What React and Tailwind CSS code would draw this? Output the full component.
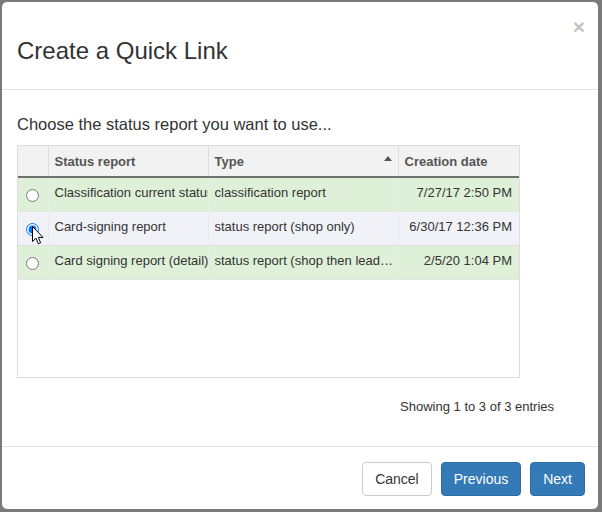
import React, { useState } from 'react';

const reports = [
  { id: 1, name: 'Classification current status', type: 'classification report', date: '7/27/17 2:50 PM', bg: 'bg-[#dff0d8]' },
  { id: 2, name: 'Card-signing report', type: 'status report (shop only)', date: '6/30/17 12:36 PM', bg: 'bg-[#f0f2f8]' },
  { id: 3, name: 'Card signing report (detail)', type: 'status report (shop then leader)', date: '2/5/20 1:04 PM', bg: 'bg-[#dff0d8]' },
];

function Cursor() {
  return (
    <svg className="absolute left-[14px] top-[6px] pointer-events-none" width="12" height="19" viewBox="0 0 12 19">
      <path d="M0.5 0.5 L0.5 15.5 L4 12.2 L6.3 17.8 L8.6 16.8 L6.3 11.4 L11 11.4 Z" fill="#fff" stroke="#000" strokeWidth="1" strokeLinejoin="miter" />
    </svg>
  );
}

export default function App() {
  const [selected, setSelected] = useState(2);

  return (
    <div className="w-[602px] h-[512px] bg-[#7b7b7b] pl-[2px] pt-[2px] font-['Liberation_Sans',Arial,sans-serif] text-[#333]">
      <div className="w-[596px] h-[507px] bg-white rounded-[5px] flex flex-col overflow-hidden">
        {/* Header */}
        <div className="h-[88px] border-b border-[#e5e5e5] pl-[15px] pr-[13px] pt-[14px] flex items-start justify-between shrink-0">
          <h3 className="mt-[22px] text-[24px] leading-[1.1] font-normal text-[#333]">Create a Quick Link</h3>
          <button className="text-[21px] leading-[21px] font-bold text-[#c4c4c4]">×</button>
        </div>

        {/* Body */}
        <div className="flex-1 px-[15px] pt-[24px]">
          <p className="text-[16.5px] leading-[20px]">Choose the status report you want to use...</p>

          <div className="mt-[11px] w-[503px] h-[233px] border border-[#ddd]">
            <table className="table-fixed border-collapse w-[501px] text-[13px] leading-[19px]">
              <colgroup>
                <col className="w-[30px]" />
                <col className="w-[160px]" />
                <col className="w-[190px]" />
                <col className="w-[121px]" />
              </colgroup>
              <thead>
                <tr className="bg-[#f2f2f2] h-[31px] border-b-2 border-[#6f6f6f] text-[#555]">
                  <th className="border-r border-[#ddd]"></th>
                  <th className="border-r border-[#ddd] text-left font-bold px-[6px]">Status report</th>
                  <th className="border-r border-[#ddd] text-left font-bold pl-[6px] pr-[6px]">
                    <div className="flex items-center justify-between">
                      <span>Type</span>
                      <span className="w-0 h-0 border-l-[4px] border-r-[4px] border-b-[5px] border-l-transparent border-r-transparent border-b-[#555] -mt-[5px]"></span>
                    </div>
                  </th>
                  <th className="text-left font-bold px-[6px]">Creation date</th>
                </tr>
              </thead>
              <tbody>
                {reports.map((r) => (
                  <tr key={r.id} className={`${r.bg} h-[34px] border-b border-[#e2e2e2]`}>
                    <td className="border-r border-[#e8ece6] align-middle">
                      <div className="relative flex justify-center pt-[3px]">
                        <input
                          type="radio"
                          name="report"
                          checked={selected === r.id}
                          onChange={() => setSelected(r.id)}
                          className="w-[13px] h-[13px] m-0"
                        />
                        {r.id === 2 && <Cursor />}
                      </div>
                    </td>
                    <td className="border-r border-[#e8ece6] align-top pt-[5px] px-[6px] overflow-hidden whitespace-nowrap">{r.name}</td>
                    <td className="border-r border-[#e8ece6] align-top pt-[5px] pl-[6px] pr-[4px] truncate">{r.type}</td>
                    <td className="align-top pt-[5px] pl-[6px] pr-[7px] text-right whitespace-nowrap">{r.date}</td>
                  </tr>
                ))}
              </tbody>
            </table>
          </div>

          <div className="flex justify-end mr-[29px] mt-[19px] text-[13px] leading-[20px]">
            Showing 1 to 3 of 3 entries
          </div>
        </div>

        {/* Footer */}
        <div className="h-[63px] border-t border-[#e5e5e5] pt-[15px] pr-[13px] flex justify-end items-start gap-[9px] shrink-0 text-[14px]">
          <button className="h-[34px] px-[12px] rounded-[4px] border border-[#ccc] bg-white text-[#333]">Cancel</button>
          <button className="h-[34px] px-[12px] rounded-[4px] border border-[#2e6da4] bg-[#337ab7] text-white">Previous</button>
          <button className="h-[34px] px-[12px] rounded-[4px] border border-[#2e6da4] bg-[#337ab7] text-white">Next</button>
        </div>
      </div>
    </div>
  );
}
